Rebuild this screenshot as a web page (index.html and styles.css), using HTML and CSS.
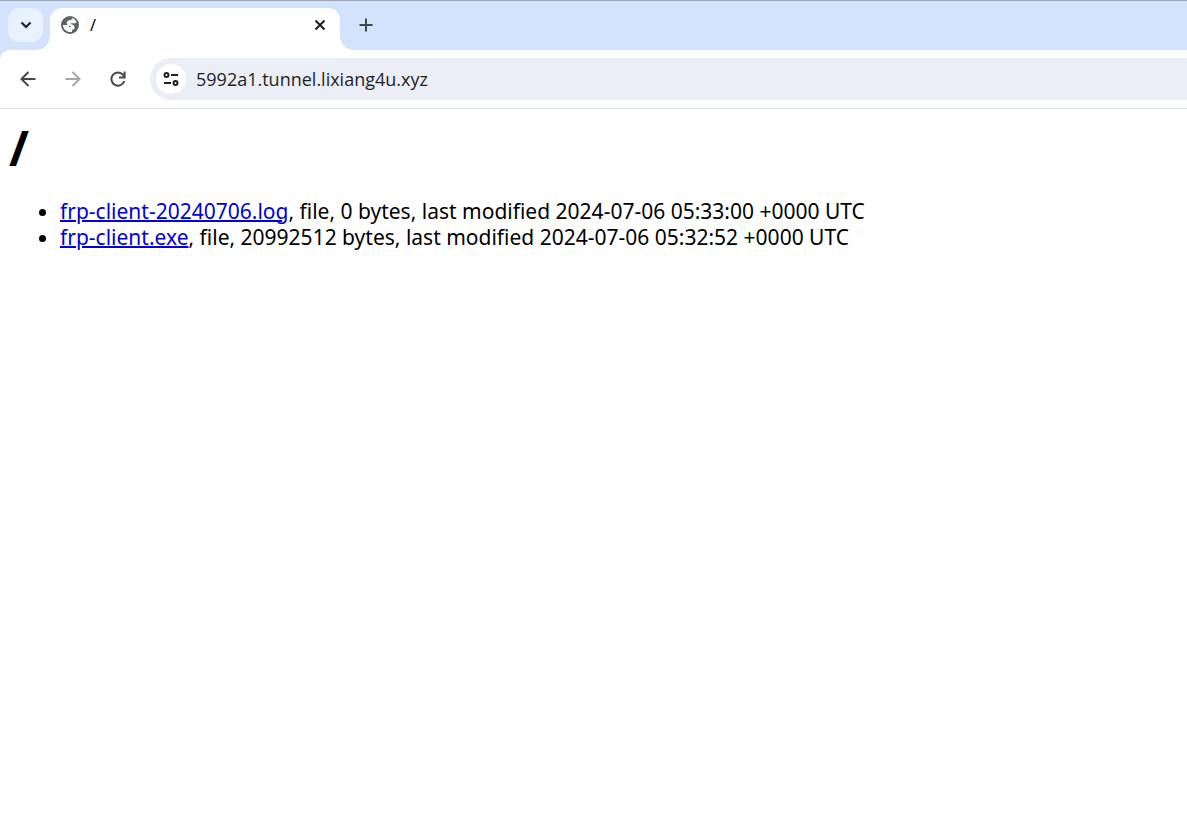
FILE: index.html
```html
<!DOCTYPE html>
<html lang="en">
<head>
<meta charset="utf-8">
<title>/</title>
<link rel="stylesheet" href="styles.css">
</head>
<body>
<header class="browser">
  <div class="strip">
    <div class="strip-start">
      <button class="tab-search" aria-label="Search tabs"><svg width="12" height="8" viewBox="0 0 12 8"><path d="M1.500 1.500 6 6l4.500-4.500" fill="none" stroke="#1f1f1f" stroke-width="2.200"/></svg></button>
    </div>
    <div class="tab-slot">
      <div class="tab">
        <svg class="globe" width="18" height="18" viewBox="0 0 18 18" aria-hidden="true"><circle cx="9" cy="9" r="9" fill="#5f6368"/><path d="M11 2c2 .5 3.700 2 4.500 4-.6 1.200-1.700 1.700-3.100 1.300-1-.3-2-.2-2.700.2 0 .5.300.8.900.9 1.800.2 3 1.200 3 3 0 1.500-1.100 2.400-2.600 2.400v2.100C6.200 16.700 2 13.500 2 9h3.500c1.700 0 2.700.9 2.700 2.300h1c.5 0 .8-.3.800-.7s-.4-.7-.9-.7c-2 0-3.300-1-3.300-2.900 0-1.600 1.100-2.500 2.900-2.700C10.100 4.200 11 3.500 11 2Z" fill="#fff"/></svg>
        <span class="tab-title">/</span>
        <button class="icon-button close" aria-label="Close tab"><svg width="12" height="12" viewBox="0 0 12 12"><path d="m1.500 1.500 9 9m0-9-9 9" stroke="#1f1f1f" stroke-width="2"/></svg></button>
      </div>
    </div>
    <div class="strip-end">
      <button class="icon-button" aria-label="New tab"><svg width="14" height="14" viewBox="0 0 14 14"><path d="M7 .5v13M.5 7h13" stroke="#474747" stroke-width="2"/></svg></button>
    </div>
  </div>
  <nav class="toolbar">
    <button class="icon-button" aria-label="Back"><svg width="16" height="16" viewBox="0 0 16 16"><path d="M15.500 8H2M8.500 1 1.500 8l7 7" fill="none" stroke="#474747" stroke-width="2"/></svg></button>
    <button class="icon-button" aria-label="Forward" disabled><svg width="16" height="16" viewBox="0 0 16 16"><path d="M.5 8H14M7.500 1l7 7-7 7" fill="none" stroke="#a6a6a6" stroke-width="2"/></svg></button>
    <button class="icon-button" aria-label="Reload"><svg width="16" height="16" viewBox="0 0 16 16"><path d="M14.300 10A6.600 6.600 0 1 1 13.100 3.800L14.600 5.500M14.600 .5v6H9" fill="none" stroke="#474747" stroke-width="2"/></svg></button>
    <div class="address">
      <button class="site-info" aria-label="View site information"><svg width="16" height="14" viewBox="0 0 16 14"><g fill="none" stroke="#1f1f1f" stroke-width="2"><circle cx="3.500" cy="3" r="2"/><path d="M8 3h7M1 11h7"/><circle cx="12.500" cy="11" r="2"/></g></svg></button>
      <input class="url" type="text" aria-label="Address" value="5992a1.tunnel.lixiang4u.xyz">
    </div>
  </nav>
</header>
<main class="page">
  <h1>/</h1>
  <ul>
    <li><a href="#log">frp-client-20240706.log</a>, file, 0 bytes, last modified 2024-07-06 05:33:00 +0000 UTC</li>
    <li><a href="#exe">frp-client.exe</a>, file, 20992512 bytes, last modified 2024-07-06 05:32:52 +0000 UTC</li>
  </ul>
</main>
</body>
</html>
```
FILE: styles.css
```css
* { box-sizing: border-box; }
body { margin: 0; background: #fff; color: #000; font-family: "Noto Sans", sans-serif; }
button { border: 0; padding: 0; background: none; display: flex; align-items: center; justify-content: center; }
svg { display: block; flex: none; }
.browser { background: #d3e3fd; border-top: 1px solid #98a3b6; }
.strip { display: flex; height: 49px; background: #fff; }
.strip-start { width: 50px; padding: 7px 8px; background: #d3e3fd; border-bottom-right-radius: 14px; }
.tab-search { width: 35px; height: 34px; border-radius: 11px; background: #e9f1fe; }
.tab-slot { width: 290px; padding-top: 7px; background: linear-gradient(#d3e3fd 50%, #fff 50%); }
.tab { display: flex; align-items: center; height: 34px; padding: 0 10px 0 11px; border-radius: 12px 12px 0 0; background: #fff; }
.tab-title { flex: 1; padding-left: 11px; font-size: 16px; }
.icon-button { width: 20px; height: 20px; }
.strip-end { flex: 1; padding: 14px 16px; background: #d3e3fd; border-bottom-left-radius: 14px; }
.toolbar { display: flex; align-items: center; gap: 25px; height: 59px; padding: 8px 0 8px 18px; background: #fff; border-top-left-radius: 10px; border-bottom: 1px solid #dfe1e5; }
.address { flex: 1; display: flex; align-items: center; gap: 10px; height: 42px; margin-left: -3px; padding-left: 6px; border-radius: 21px 0 0 21px; background: #ebeef7; }
.site-info { width: 30px; height: 30px; border-radius: 50%; background: #fff; }
.url { flex: 1; min-width: 0; padding: 0; border: 0; outline: 0; background: none; color: #1f1f1f; font-family: "Open Sans", sans-serif; font-size: 18px; }
.page { padding: 7px 9px; }
h1 { margin: 0; font-size: 48px; line-height: 64px; }
ul { margin: 18px 0; padding-left: 51px; font-size: 21px; line-height: 26px; }
a { color: #0000d8; text-decoration-thickness: 2px; }
```
